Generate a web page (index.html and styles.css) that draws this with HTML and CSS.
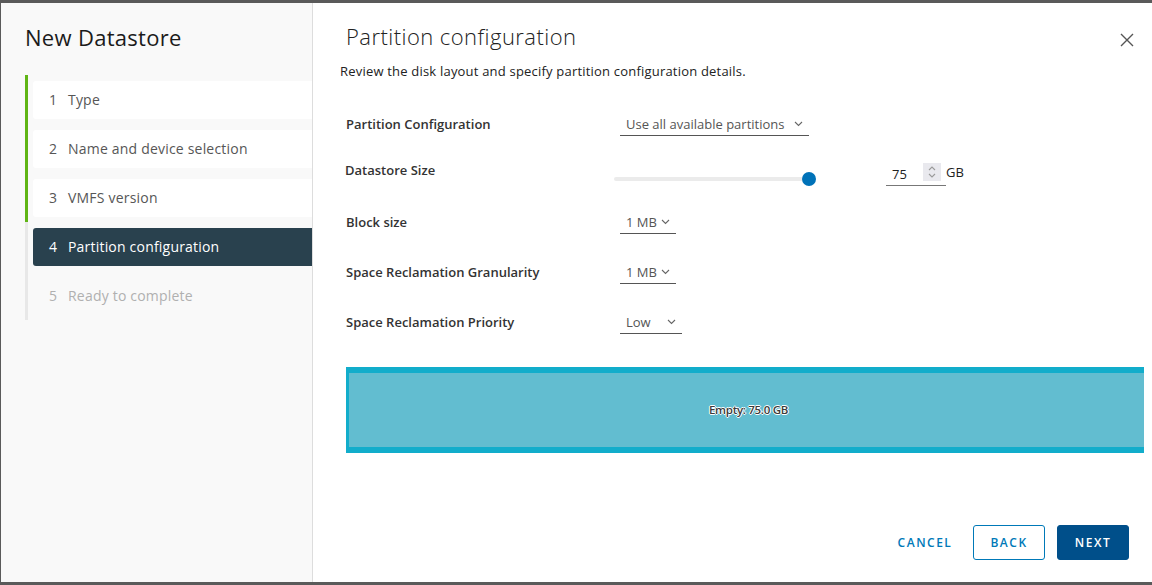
FILE: index.html
```html
<!DOCTYPE html>
<html>
<head>
<meta charset="utf-8">
<link rel="stylesheet" href="styles.css">
</head>
<body>
<div class="modal">
  <aside class="side">
    <h1 class="side-title">New Datastore</h1>
    <ol class="steps">
      <li class="step done"><div class="step-box"><span class="num">1</span>Type</div></li>
      <li class="step done"><div class="step-box"><span class="num">2</span>Name and device selection</div></li>
      <li class="step done"><div class="step-box"><span class="num">3</span>VMFS version</div></li>
      <li class="step current"><div class="step-box"><span class="num">4</span>Partition configuration</div></li>
      <li class="step todo"><div class="step-box"><span class="num">5</span>Ready to complete</div></li>
    </ol>
  </aside>
  <main class="main">
    <header class="head">
      <h2 class="title">Partition configuration</h2>
      <button class="close" aria-label="Close">
        <svg width="16" height="16" viewBox="0 0 16 16"><path d="M2 2 L14 14 M14 2 L2 14" stroke="#555" stroke-width="1.4" fill="none"/></svg>
      </button>
    </header>
    <p class="desc">Review the disk layout and specify partition configuration details.</p>

    <div class="form">
      <div class="row r1">
        <label class="lbl">Partition Configuration</label>
        <div class="select w189"><span>Use all available partitions</span><svg class="chev" width="9" height="6" viewBox="0 0 9 6"><path d="M1 1 L4.5 4.5 L8 1" stroke="#666" stroke-width="1.1" fill="none"/></svg></div>
      </div>
      <div class="row r2">
        <label class="lbl lbl-size">Datastore Size</label>
        <div class="slider"><div class="track"></div><div class="thumb"></div></div>
        <div class="numbox"><span class="numval">75</span><span class="spin"><svg width="10" height="16" viewBox="0 0 10 16"><path d="M2 6 L5 3 L8 6 M2 10 L5 13 L8 10" stroke="#9a9a9a" stroke-width="1.1" fill="none"/></svg></span></div>
        <span class="unit">GB</span>
      </div>
      <div class="row r3">
        <label class="lbl">Block size</label>
        <div class="select w56"><span>1 MB</span><svg class="chev" width="9" height="6" viewBox="0 0 9 6"><path d="M1 1 L4.5 4.5 L8 1" stroke="#666" stroke-width="1.1" fill="none"/></svg></div>
      </div>
      <div class="row r4">
        <label class="lbl">Space Reclamation Granularity</label>
        <div class="select w56"><span>1 MB</span><svg class="chev" width="9" height="6" viewBox="0 0 9 6"><path d="M1 1 L4.5 4.5 L8 1" stroke="#666" stroke-width="1.1" fill="none"/></svg></div>
      </div>
      <div class="row r5">
        <label class="lbl">Space Reclamation Priority</label>
        <div class="select w62"><span>Low</span><svg class="chev" width="9" height="6" viewBox="0 0 9 6"><path d="M1 1 L4.5 4.5 L8 1" stroke="#666" stroke-width="1.1" fill="none"/></svg></div>
      </div>
    </div>

    <div class="disk"><span class="disk-label">Empty: 75.0 GB</span></div>

    <footer class="foot">
      <button class="btn link">CANCEL</button>
      <button class="btn outline">BACK</button>
      <button class="btn primary">NEXT</button>
    </footer>
  </main>
</div>
</body>
</html>
```

FILE: styles.css
```css
* { box-sizing: border-box; }
html, body { margin: 0; padding: 0; }
body {
  width: 1152px;
  height: 585px;
  overflow: hidden;
  background: #5a5a5a;
  padding: 3px 0 3px 1px;
  font-family: "Open Sans", Lato, sans-serif;
  color: #333;
}
.modal {
  display: flex;
  height: 579px;
  width: 1151px;
  background: #fff;
}
.side {
  width: 312px;
  flex: none;
  background: #f9f9f9;
  border-right: 1px solid #dddddd;
  padding: 20px 0 0 24px;
}
.side-title {
  margin: 0;
  font-size: 22px;
  font-weight: 400;
  line-height: 28px;
  color: #1b1b1b;
  letter-spacing: 0.3px;
}
.steps {
  list-style: none;
  margin: 24px 0 0 0;
  padding: 0;
}
.step {
  height: 49px;
  border-left: 3px solid #e8e8e8;
  padding: 6px 0 5px 5px;
}
.step.done { border-left-color: #60b515; }
.step-box {
  height: 38px;
  display: flex;
  align-items: center;
  padding-left: 16px;
  padding-bottom: 1px;
  font-size: 14px;
  letter-spacing: 0.2px;
  color: #565656;
  border-radius: 3px 0 0 3px;
  white-space: nowrap;
}
.num { width: 19px; }
.step.done .step-box { background: #fff; }
.step.current .step-box { background: #29414e; color: #fff; }
.step.todo .step-box { color: #b0b0b0; }

.main {
  flex: 1;
  display: flex;
  flex-direction: column;
  padding: 0 8px 0 27px;
}
.head {
  display: flex;
  align-items: center;
  justify-content: space-between;
  height: 52px;
  padding-top: 14px;
  padding-left: 6px;
}
.title {
  margin: 0;
  font-size: 22px;
  font-weight: 300;
  color: #222;
  letter-spacing: 0.45px;
}
.close {
  background: none;
  border: 0;
  padding: 0;
  margin-right: 9px;
  margin-top: 8px;
  width: 16px;
  height: 16px;
  display: flex;
}
.desc {
  margin: 7px 0 0 0;
  font-size: 13px;
  letter-spacing: 0.2px;
  color: #222;
}
.form {
  margin-top: 19px;
  padding-left: 6px;
}
.row {
  display: flex;
  align-items: center;
}
.r1 { height: 50px; }
.r2 { height: 48px; }
.r3 { height: 50px; }
.r4 { height: 50px; }
.r5 { height: 50px; }
.lbl {
  width: 274px;
  flex: none;
  font-size: 13px;
  font-weight: 600;
  color: #333;
  white-space: nowrap;
}
.lbl-size { margin-left: -1px; align-self: flex-start; margin-top: 12px; }
.select {
  display: flex;
  align-items: center;
  justify-content: space-between;
  height: 24px;
  padding: 0 6px 0 6px;
  border-bottom: 1px solid #555;
  font-size: 13px;
  color: #555;
  white-space: nowrap;
}
.w189 { width: 189px; }
.w56 { width: 56px; }
.w62 { width: 62px; }
.chev { margin-left: 4px; flex: none; }
.slider {
  position: relative;
  width: 202px;
  height: 16px;
  margin-left: -5px;
  margin-top: 12px;
}
.track {
  position: absolute;
  left: 0; right: 7px;
  top: 6px;
  height: 4px;
  background: #ebebeb;
  border-radius: 2px;
}
.thumb {
  position: absolute;
  right: 0;
  top: 1px;
  width: 14px;
  height: 14px;
  border-radius: 50%;
  background: #0072b8;
}
.numbox {
  display: flex;
  align-items: center;
  justify-content: space-between;
  width: 60px;
  height: 24px;
  margin-left: 70px;
  margin-top: 2px;
  padding-left: 6px;
  padding-right: 5px;
  border-bottom: 1px solid #777;
  font-size: 13px;
  color: #222;
}
.spin {
  width: 18px;
  height: 18px;
  background: #e9e9ee;
  display: flex;
  align-items: center;
  justify-content: center;
  margin-top: -3px;
}
.unit { font-size: 13px; color: #222; margin-top: -2px; }

.disk {
  margin-top: 20px;
  margin-left: 6px;
  width: 798px;
  height: 86px;
  background: #62bdd0;
  border-top: 6px solid #12adcb;
  border-bottom: 6px solid #12adcb;
  border-left: 3px solid #12adcb;
  display: flex;
  align-items: center;
  justify-content: center;
}
.disk-label {
  font-size: 11.5px;
  font-weight: 600;
  color: #3a3a3a;
  letter-spacing: -0.3px;
  text-shadow: 1px 0 0 #fff, -1px 0 0 #fff, 0 1px 0 #fff, 0 -1px 0 #fff;
  margin-left: 4px;
  margin-bottom: 2px;
}
.foot {
  margin-top: auto;
  height: 57px;
  padding-bottom: 22px;
  display: flex;
  justify-content: flex-end;
  align-items: stretch;
  gap: 12px;
  padding-right: 15px;
}
.btn {
  font-family: "Open Sans", Lato, sans-serif;
  font-size: 12px;
  font-weight: 600;
  letter-spacing: 1.5px;
  border-radius: 3px;
  padding: 0;
  width: 72px;
  cursor: pointer;
}
.btn.link {
  background: none;
  border: 0;
  color: #0079b8;
  width: 76px;
  margin-right: -2px;
}
.btn.outline {
  background: #fff;
  border: 1px solid #0079b8;
  color: #0079b8;
}
.btn.primary {
  background: #004f8a;
  border: 1px solid #004f8a;
  color: #fff;
}
```
